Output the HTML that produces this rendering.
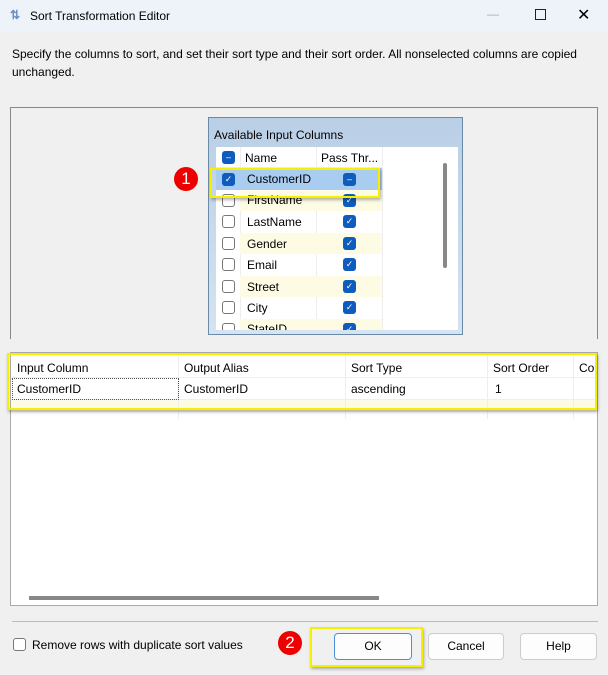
<!DOCTYPE html><html><head><style>
*{box-sizing:border-box;margin:0;padding:0}
body{width:608px;height:675px;background:#f0f0f0;font-family:"Liberation Sans",sans-serif;font-size:12px;color:#000;position:relative;overflow:hidden}
.a{position:absolute}
.cb{position:absolute;width:13px;height:13px;border:1px solid #777;border-radius:3px;background:#fff}
.cc{position:absolute;width:13px;height:13px;border-radius:3px;background:#0f5cbf;color:#fff;font-size:9px;text-align:center;line-height:13px}
.btn{position:absolute;height:27px;border:1px solid #ccc;border-radius:4px;background:#fdfdfd;text-align:center;line-height:25px}
.red{position:absolute;width:24px;height:24px;border-radius:12px;background:#e00;color:#fff;font-size:17px;text-align:center;line-height:24px}
</style></head><body>
<div class="a" style="left:0;top:0;width:608px;height:32px;background:#eef3f9"></div>
<div class="a" style="left:10px;top:8px;color:#6a8fc0;font-size:12px;font-weight:bold">⇅</div>
<div class="a" style="left:30px;top:9px">Sort Transformation Editor</div>
<div class="a" style="left:487px;top:7px;color:#aaa">—</div>
<div class="a" style="left:535px;top:9px;width:11px;height:11px;border:1px solid #222"></div>
<div class="a" style="left:577px;top:5px;font-size:16px">✕</div>
<div class="a" style="left:12px;top:45px;width:590px;line-height:18px">Specify the columns to sort, and set their sort type and their sort order. All nonselected columns are copied unchanged.</div>
<div class="a" style="left:10px;top:107px;width:588px;height:232px;border:1px solid #888;border-bottom:none;background:#f0f0f0"></div>
<div class="a" style="left:208px;top:117px;width:255px;height:218px;border:1px solid #6a8aa8;background:linear-gradient(#b9cfe6,#d6e3f0)"></div>
<div class="a" style="left:214px;top:128px">Available Input Columns</div>
<div class="a" style="left:216px;top:147px;width:242px;height:183px;background:#fff;overflow:hidden">
<div class="a" style="left:0;top:0;width:166px;height:183px">
<div class="a" style="left:0;top:0;width:166px;height:21px;border-bottom:1px solid #eee"></div>
<div class="cc" style="left:6px;top:4px">–</div>
<div class="a" style="left:29px;top:4px">Name</div>
<div class="a" style="left:105px;top:4px">Pass Thr...</div>
<div class="a" style="left:24px;top:0;width:1px;height:183px;background:#eee"></div>
<div class="a" style="left:100px;top:0;width:1px;height:183px;background:#eee"></div>
<div class="a" style="left:166px;top:0;width:1px;height:183px;background:#eee"></div>
</div>
<div class="a" style="left:0;top:21px;width:166px;height:22px;background:#a9cdf0"></div>
<div class="a" style="left:24px;top:43px;width:142px;height:21px;background:#fdfbe4"></div>
<div class="a" style="left:24px;top:86px;width:142px;height:21px;background:#fdfbe4"></div>
<div class="a" style="left:24px;top:129px;width:142px;height:21px;background:#fdfbe4"></div>
<div class="a" style="left:24px;top:172px;width:142px;height:21px;background:#fdfbe4"></div>
<div class="cc" style="left:6px;top:26px">✓</div><div class="a" style="left:31px;top:25px">CustomerID</div><div class="cc" style="left:127px;top:26px">–</div>
<div class="cb" style="left:6px;top:47px"></div><div class="a" style="left:31px;top:46px">FirstName</div><div class="cc" style="left:127px;top:47px">✓</div>
<div class="cb" style="left:6px;top:68px"></div><div class="a" style="left:31px;top:68px">LastName</div><div class="cc" style="left:127px;top:68px">✓</div>
<div class="cb" style="left:6px;top:90px"></div><div class="a" style="left:31px;top:90px">Gender</div><div class="cc" style="left:127px;top:90px">✓</div>
<div class="cb" style="left:6px;top:111px"></div><div class="a" style="left:31px;top:111px">Email</div><div class="cc" style="left:127px;top:111px">✓</div>
<div class="cb" style="left:6px;top:133px"></div><div class="a" style="left:31px;top:133px">Street</div><div class="cc" style="left:127px;top:133px">✓</div>
<div class="cb" style="left:6px;top:154px"></div><div class="a" style="left:31px;top:154px">City</div><div class="cc" style="left:127px;top:154px">✓</div>
<div class="cb" style="left:6px;top:176px"></div><div class="a" style="left:31px;top:175px">StateID</div><div class="cc" style="left:127px;top:176px">✓</div>
<div class="a" style="left:227px;top:16px;width:4px;height:105px;background:#888;border-radius:2px"></div>
</div>
<div class="a" style="left:210px;top:168px;width:170px;height:30px;border:2px solid #f5f000;box-shadow:1px 2px 3px rgba(0,0,0,.3)"></div>
<div class="red" style="left:174px;top:167px">1</div>
<div class="a" style="left:10px;top:352px;width:588px;height:254px;border:1px solid #aaa;background:#fff;overflow:hidden">
<div class="a" style="left:0;top:47px;width:588px;height:11px;background:#fdfbe4"></div>
<div class="a" style="left:0;top:24px;width:588px;height:1px;background:#eee"></div>
<div class="a" style="left:0;top:46px;width:588px;height:1px;background:#eee"></div>
<div class="a" style="left:0;top:58px;width:588px;height:1px;background:#eee"></div>
<div class="a" style="left:167px;top:0;width:1px;height:66px;background:#eee"></div>
<div class="a" style="left:334px;top:0;width:1px;height:66px;background:#eee"></div>
<div class="a" style="left:476px;top:0;width:1px;height:66px;background:#eee"></div>
<div class="a" style="left:562px;top:0;width:1px;height:66px;background:#eee"></div>
<div class="a" style="left:6px;top:8px">Input Column</div><div class="a" style="left:173px;top:8px">Output Alias</div><div class="a" style="left:340px;top:8px">Sort Type</div><div class="a" style="left:482px;top:8px">Sort Order</div><div class="a" style="left:568px;top:8px">Con</div>
<div class="a" style="left:1px;top:25px;width:167px;height:22px;border:1px dotted #555"></div>
<div class="a" style="left:6px;top:29px">CustomerID</div><div class="a" style="left:173px;top:29px">CustomerID</div><div class="a" style="left:340px;top:29px">ascending</div><div class="a" style="left:484px;top:29px">1</div>
<div class="a" style="left:18px;top:243px;width:350px;height:4px;background:#888"></div>
</div>
<div class="a" style="left:7px;top:353px;width:590px;height:57px;border:2px solid #f5f000;box-shadow:1px 2px 3px rgba(0,0,0,.3)"></div>
<div class="a" style="left:12px;top:621px;width:586px;height:1px;background:#bbb"></div>
<div class="cb" style="left:13px;top:638px"></div>
<div class="a" style="left:32px;top:638px">Remove rows with duplicate sort values</div>
<div class="red" style="left:278px;top:631px">2</div>
<div class="a" style="left:310px;top:627px;width:113px;height:40px;border:2px solid #f5f000;box-shadow:1px 2px 3px rgba(0,0,0,.3)"></div>
<div class="btn" style="left:334px;top:633px;width:78px;border-color:#4a90d9">OK</div>
<div class="btn" style="left:428px;top:633px;width:76px">Cancel</div>
<div class="btn" style="left:520px;top:633px;width:77px">Help</div>
</body></html>
